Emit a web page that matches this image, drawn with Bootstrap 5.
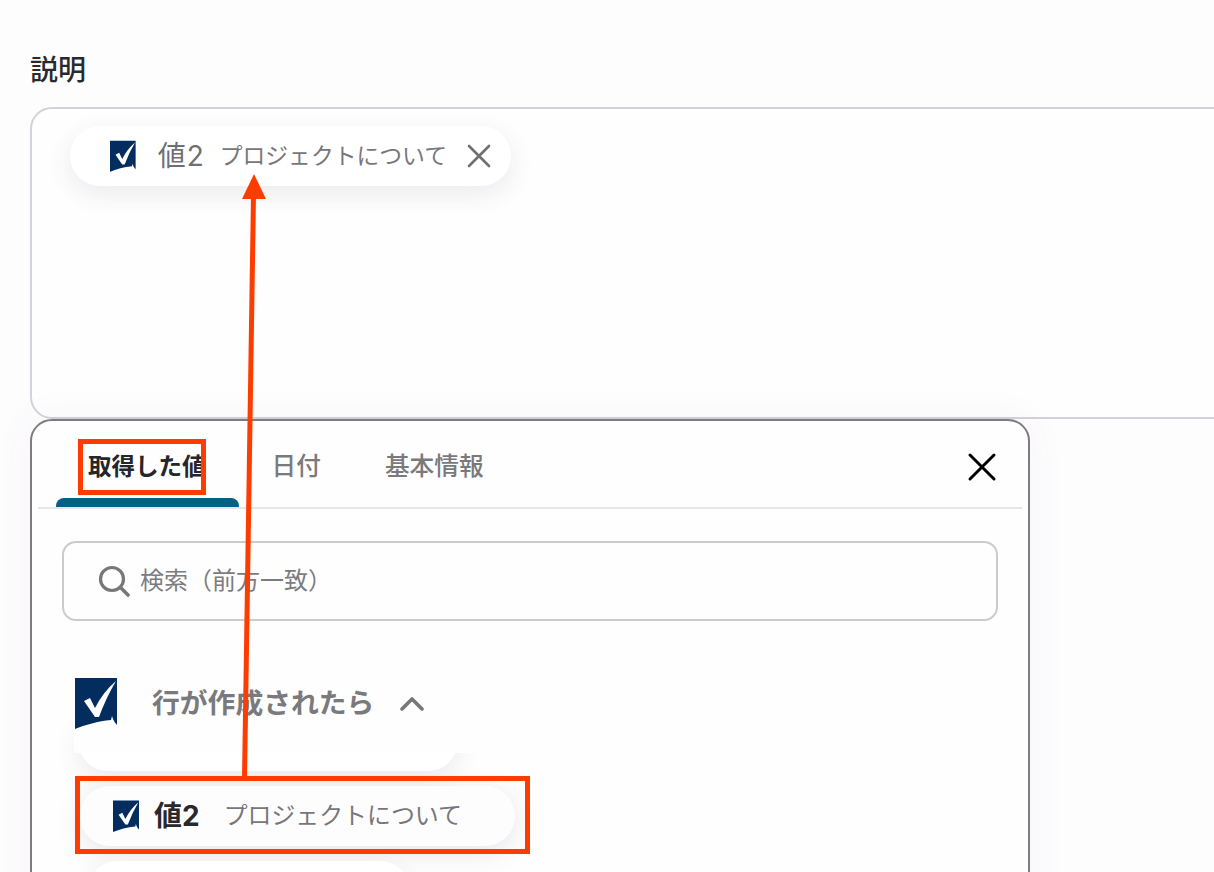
<!DOCTYPE html>
<html lang="ja"><head><meta charset="utf-8">
<title>説明</title>
<link href="https://cdn.jsdelivr.net/npm/bootstrap@5.3.0/dist/css/bootstrap.min.css" rel="stylesheet">
<style>
html,body{height:872px;overflow:hidden;background:#fefdfe;font-family:"Inter","Noto Sans CJK JP",sans-serif;color:#27272b}
.stage{position:relative;width:1214px;height:872px;overflow:hidden;padding:52px 0 0 30px}
.fld-label{font-size:28px;font-weight:500;line-height:36px;margin:0 0 19px 0;color:#2a2a2e}
.editor{width:1300px;height:312px;border:2px solid #d2d2dc;border-radius:22px 0 0 22px;padding:17px 38px;background:#fefefe}
.chip{height:60px;border-radius:30px;background:#fff;box-shadow:0 8px 24px rgba(70,60,90,.10)}
.chip-top{width:441px;padding:0 20px 0 40px;color:#6f6f73}
.chip-name{font-size:28px;line-height:1;margin-left:22px;white-space:nowrap}
.chip-top .chip-name{letter-spacing:1px}
.chip-desc{font-size:22.8px;line-height:1;margin-left:15px;color:#77777b;white-space:nowrap}
.chip-x{margin-left:20px;flex:none}
.panel{width:1000px;height:600px;margin-top:0;border:2px solid #7f7b80;border-radius:22px 22px 0 0;padding:0 6px;background:#fefefe;box-shadow:0 0 40px rgba(70,60,90,.05)}
.tabbar{height:88px;border-bottom:2px solid #e6e5e8;padding-left:18px;position:relative}
.tab-item{height:86px;padding:5px 31px 0 33px;font-size:24.7px;font-weight:500;color:#7a7a7d;line-height:1;position:relative;white-space:nowrap}
.tab-item.on{color:#25252a;font-size:23.5px;font-weight:700;padding:5px 33px 0 32px}
.tab-item.on::after{content:"";position:absolute;left:0;right:0;bottom:0;height:9px;background:#066085;border-radius:8px 8px 0 0}
.tab-close{position:absolute;right:25px;top:31px}
.searchbox{height:80px;margin:32px 24px 0 24px;border:2px solid #cbcacd;border-radius:14px;padding-left:34px;gap:10px;color:#7c7c80;font-size:24px;background:#fefefe}
.sect{height:132px;margin-left:36px;position:relative;z-index:1;background:#fefefe;padding-top:34px}
.sect-title{font-size:27.8px;font-weight:700;color:#7a7a7d;margin-left:34px}
.sect-chev{margin-left:26px}
.chiplist{margin-top:-42px;padding-left:42px;gap:15px}
.chip-ghost{width:380px;height:60px;margin-left:-2px}
.chip-mid{width:435px;padding:0 0 0 33px;background:#fefdfe;box-shadow:0 6px 26px rgba(70,60,90,.13)}
.chip-mid .chip-name{font-weight:700;color:#29292d;margin-left:15px}
.chip-mid .chip-desc{font-size:23.9px;margin-left:24px;color:#77777b}
.chip-low{width:322px;margin-left:8px}
.mark-box{position:absolute;border:5px solid #ff3c00;pointer-events:none}
.mb-tab{left:78px;top:439px;width:128px;height:56px}
.mb-row{left:75px;top:776px;width:455px;height:78px}
.arrow-layer{position:absolute;left:0;top:0;pointer-events:none;z-index:3}
</style></head>
<body>
<div class="stage">
  <div class="fld-label">説明</div>
  <div class="editor">
    <div class="chip chip-top d-inline-flex align-items-center">
      <svg width="26" height="33" viewBox="0 0 42 52"><path fill="#032d5e" d="M0 0H42V47C40 45 38 42 37 38L36 42C23 43 10 47 0 51Z"/><path fill="#fff" d="M9 23 15 20 20 30Q28 14 41 3 31 20 24 39H20Z"/></svg>
      <span class="chip-name">値2</span>
      <span class="chip-desc">プロジェクトについて</span>
      <svg class="chip-x" width="24" height="24" viewBox="0 0 24 24"><path d="M2 2 22 22M22 2 2 22" stroke="#707074" stroke-width="2.6" stroke-linecap="round"/></svg>
    </div>
  </div>
  <div class="panel">
    <div class="tabbar d-flex">
      <div class="tab-item on d-flex align-items-center">取得した値</div>
      <div class="tab-item d-flex align-items-center">日付</div>
      <div class="tab-item d-flex align-items-center">基本情報</div>
      <svg class="tab-close" width="30" height="30" viewBox="0 0 30 30"><path d="M3 3 27 27M27 3 3 27" stroke="#000" stroke-width="3" stroke-linecap="round"/></svg>
    </div>
    <div class="searchbox d-flex align-items-center">
      <svg width="32" height="32" viewBox="0 0 32 32"><circle cx="14" cy="14" r="11.500" fill="none" stroke="#77777b" stroke-width="3.2"/><path d="M22.500 22.500 30 30" stroke="#77777b" stroke-width="3.6" stroke-linecap="round"/></svg>
      <span>検索（前方一致）</span>
    </div>
    <div class="sect d-flex align-items-center">
      <svg width="44" height="52" viewBox="0 0 42 52"><path fill="#032d5e" d="M0 0H42V47C40 45 38 42 37 38L36 42C23 43 10 47 0 51Z"/><path fill="#fff" d="M9 23 15 20 20 30Q28 14 41 3 31 20 24 39H20Z"/></svg>
      <span class="sect-title">行が作成されたら</span>
      <svg class="sect-chev" width="24" height="16" viewBox="0 0 24 16"><path d="M2 13 12 3 22 13" fill="none" stroke="#77777b" stroke-width="3.6" stroke-linecap="round" stroke-linejoin="round"/></svg>
    </div>
    <div class="chiplist d-flex flex-column">
      <div class="chip chip-ghost"></div>
      <div class="chip chip-mid d-flex align-items-center">
        <svg width="26" height="33" viewBox="0 0 42 52"><path fill="#032d5e" d="M0 0H42V47C40 45 38 42 37 38L36 42C23 43 10 47 0 51Z"/><path fill="#fff" d="M9 23 15 20 20 30Q28 14 41 3 31 20 24 39H20Z"/></svg>
        <span class="chip-name">値2</span>
        <span class="chip-desc">プロジェクトについて</span>
      </div>
      <div class="chip chip-low"></div>
    </div>
  </div>
  <div class="mark-box mb-tab"></div>
  <div class="mark-box mb-row"></div>
  <svg class="arrow-layer" width="1214" height="872" viewBox="0 0 1214 872"><path d="M244.500 778 253.500 195" stroke="#ff3c00" stroke-width="5" fill="none"/><path d="M254 174 266 199H242Z" fill="#ff3c00"/></svg>
</div>
<script src="https://cdn.jsdelivr.net/npm/bootstrap@5.3.0/dist/js/bootstrap.bundle.min.js"></script>
</body></html>
